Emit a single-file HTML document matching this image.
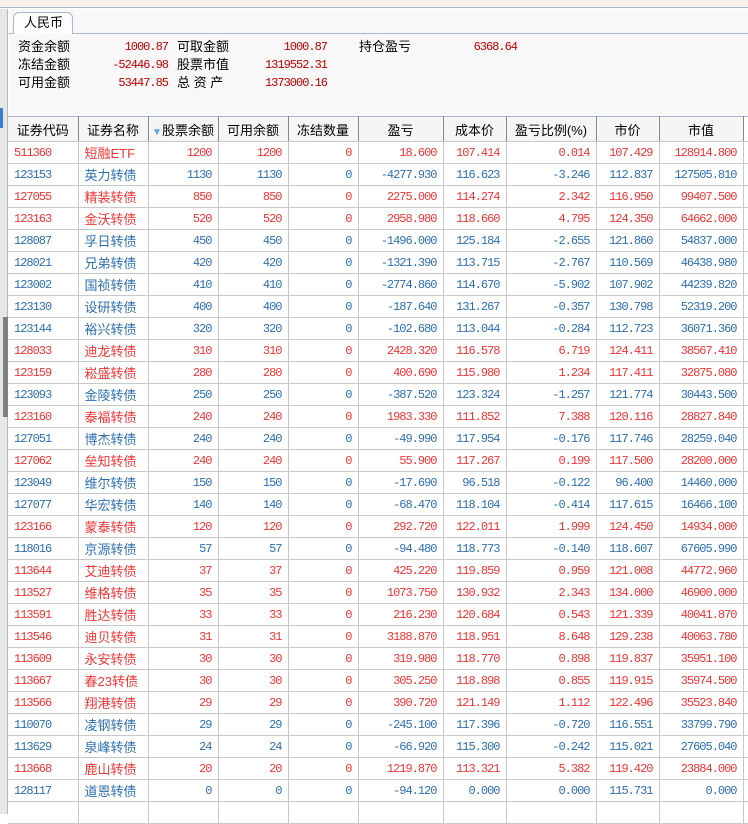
<!DOCTYPE html>
<html><head><meta charset="utf-8"><style>
*{margin:0;padding:0;box-sizing:border-box}
body{width:748px;height:814px;overflow:hidden;background:#fff;position:relative;font-family:"Liberation Sans","Noto Sans CJK SC",sans-serif}
.top{position:absolute;left:0;top:0;width:748px;height:8px;background:#f7f3ea;border-bottom:1px solid #a8b8cc}
.lstrip{position:absolute;left:0;top:9px;width:8px;height:805px;background:#e6e6e6;border-right:1px solid #b8b8b8}
.panel{position:absolute;left:9px;top:9px;width:739px;height:107px;background:#f8f8f8}
.tabline{position:absolute;left:9px;top:33px;width:739px;height:1px;background:#a8b8cc}
.tab{position:absolute;left:13px;top:12px;width:60px;height:22px;background:#fcfdff;border:1px solid #a8b8cc;border-bottom:none;border-radius:6px 6px 0 0;font-size:13px;line-height:20px;padding-left:10px;color:#000}
.info{position:absolute;font-size:13px;color:#000;line-height:18px}
.v{position:absolute;font-size:12px;color:#c00000;text-align:right;line-height:18px;font-family:"Liberation Mono",monospace;letter-spacing:-1px}
table{position:absolute;left:8px;top:116px;border-collapse:collapse;table-layout:fixed;width:740px}
th{height:25px;background:#f5f5f5;border-top:1px solid #a8b8cc;border-right:1px solid #888;border-bottom:1px solid #c8c8c8;font-weight:normal;font-size:13px;color:#000}
td{height:22px;border-right:1px solid #c8c8c8;border-bottom:1px solid #c8c8c8;font-size:12px;font-family:"Liberation Mono",monospace;letter-spacing:-1px;text-align:right;padding-right:6px;white-space:nowrap;overflow:hidden}
td.c{text-align:left;padding-left:6px}
td.n{text-align:left;padding-left:6px;font-family:"Liberation Sans","Noto Sans CJK SC",sans-serif;font-size:13px;letter-spacing:0}
tr.r td{color:#f03434}
tr.b td{color:#2e6fb0}
</style></head><body>
<div class="top"></div>
<div class="lstrip"></div>
<div style="position:absolute;left:0;top:108px;width:3px;height:20px;background:#3a7fd0"></div>
<div style="position:absolute;left:3px;top:317px;width:5px;height:100px;background:#808080"></div>
<div class="panel"></div>
<div class="tabline"></div>
<div class="tab">人民币</div>
<div class="info" style="left:18px;top:38px">资金余额</div>
<div class="info" style="left:18px;top:56px">冻结金额</div>
<div class="info" style="left:18px;top:74px">可用金额</div>
<div class="v" style="left:90px;width:78px;top:38px">1000.87</div>
<div class="v" style="left:90px;width:78px;top:56px">-52446.98</div>
<div class="v" style="left:90px;width:78px;top:74px">53447.85</div>
<div class="info" style="left:177px;top:38px">可取金额</div>
<div class="info" style="left:177px;top:56px">股票市值</div>
<div class="info" style="left:177px;top:74px">总&nbsp;资&nbsp;产</div>
<div class="v" style="left:240px;width:87px;top:38px">1000.87</div>
<div class="v" style="left:240px;width:87px;top:56px">1319552.31</div>
<div class="v" style="left:240px;width:87px;top:74px">1373000.16</div>
<div class="info" style="left:359px;top:38px">持仓盈亏</div>
<div class="v" style="left:440px;width:77px;top:38px">6368.64</div>
<table>
<colgroup><col style="width:70px"><col style="width:70px"><col style="width:70px"><col style="width:70px"><col style="width:70px"><col style="width:85px"><col style="width:63px"><col style="width:90px"><col style="width:63px"><col style="width:84px"><col style="width:5px"></colgroup>
<tr><th>证券代码</th><th>证券名称</th><th><span style="color:#5aa0e0;font-size:10px">▼</span>股票余额</th><th>可用余额</th><th>冻结数量</th><th>盈亏</th><th>成本价</th><th>盈亏比例(%)</th><th>市价</th><th>市值</th><th style="border-right:none;background:#fff"></th></tr>
<tr class="r"><td class="c">511360</td><td class="n">短融ETF</td><td>1200</td><td>1200</td><td>0</td><td>18.600</td><td>107.414</td><td>0.014</td><td>107.429</td><td>128914.800</td><td></td></tr>
<tr class="b"><td class="c">123153</td><td class="n">英力转债</td><td>1130</td><td>1130</td><td>0</td><td>-4277.930</td><td>116.623</td><td>-3.246</td><td>112.837</td><td>127505.810</td><td></td></tr>
<tr class="r"><td class="c">127055</td><td class="n">精装转债</td><td>850</td><td>850</td><td>0</td><td>2275.000</td><td>114.274</td><td>2.342</td><td>116.950</td><td>99407.500</td><td></td></tr>
<tr class="r"><td class="c">123163</td><td class="n">金沃转债</td><td>520</td><td>520</td><td>0</td><td>2958.980</td><td>118.660</td><td>4.795</td><td>124.350</td><td>64662.000</td><td></td></tr>
<tr class="b"><td class="c">128087</td><td class="n">孚日转债</td><td>450</td><td>450</td><td>0</td><td>-1496.000</td><td>125.184</td><td>-2.655</td><td>121.860</td><td>54837.000</td><td></td></tr>
<tr class="b"><td class="c">128021</td><td class="n">兄弟转债</td><td>420</td><td>420</td><td>0</td><td>-1321.390</td><td>113.715</td><td>-2.767</td><td>110.569</td><td>46438.980</td><td></td></tr>
<tr class="b"><td class="c">123002</td><td class="n">国祯转债</td><td>410</td><td>410</td><td>0</td><td>-2774.860</td><td>114.670</td><td>-5.902</td><td>107.902</td><td>44239.820</td><td></td></tr>
<tr class="b"><td class="c">123130</td><td class="n">设研转债</td><td>400</td><td>400</td><td>0</td><td>-187.640</td><td>131.267</td><td>-0.357</td><td>130.798</td><td>52319.200</td><td></td></tr>
<tr class="b"><td class="c">123144</td><td class="n">裕兴转债</td><td>320</td><td>320</td><td>0</td><td>-102.680</td><td>113.044</td><td>-0.284</td><td>112.723</td><td>36071.360</td><td></td></tr>
<tr class="r"><td class="c">128033</td><td class="n">迪龙转债</td><td>310</td><td>310</td><td>0</td><td>2428.320</td><td>116.578</td><td>6.719</td><td>124.411</td><td>38567.410</td><td></td></tr>
<tr class="r"><td class="c">123159</td><td class="n">崧盛转债</td><td>280</td><td>280</td><td>0</td><td>400.690</td><td>115.980</td><td>1.234</td><td>117.411</td><td>32875.080</td><td></td></tr>
<tr class="b"><td class="c">123093</td><td class="n">金陵转债</td><td>250</td><td>250</td><td>0</td><td>-387.520</td><td>123.324</td><td>-1.257</td><td>121.774</td><td>30443.500</td><td></td></tr>
<tr class="r"><td class="c">123160</td><td class="n">泰福转债</td><td>240</td><td>240</td><td>0</td><td>1983.330</td><td>111.852</td><td>7.388</td><td>120.116</td><td>28827.840</td><td></td></tr>
<tr class="b"><td class="c">127051</td><td class="n">博杰转债</td><td>240</td><td>240</td><td>0</td><td>-49.990</td><td>117.954</td><td>-0.176</td><td>117.746</td><td>28259.040</td><td></td></tr>
<tr class="r"><td class="c">127062</td><td class="n">垒知转债</td><td>240</td><td>240</td><td>0</td><td>55.900</td><td>117.267</td><td>0.199</td><td>117.500</td><td>28200.000</td><td></td></tr>
<tr class="b"><td class="c">123049</td><td class="n">维尔转债</td><td>150</td><td>150</td><td>0</td><td>-17.690</td><td>96.518</td><td>-0.122</td><td>96.400</td><td>14460.000</td><td></td></tr>
<tr class="b"><td class="c">127077</td><td class="n">华宏转债</td><td>140</td><td>140</td><td>0</td><td>-68.470</td><td>118.104</td><td>-0.414</td><td>117.615</td><td>16466.100</td><td></td></tr>
<tr class="r"><td class="c">123166</td><td class="n">蒙泰转债</td><td>120</td><td>120</td><td>0</td><td>292.720</td><td>122.011</td><td>1.999</td><td>124.450</td><td>14934.000</td><td></td></tr>
<tr class="b"><td class="c">118016</td><td class="n">京源转债</td><td>57</td><td>57</td><td>0</td><td>-94.480</td><td>118.773</td><td>-0.140</td><td>118.607</td><td>67605.990</td><td></td></tr>
<tr class="r"><td class="c">113644</td><td class="n">艾迪转债</td><td>37</td><td>37</td><td>0</td><td>425.220</td><td>119.859</td><td>0.959</td><td>121.008</td><td>44772.960</td><td></td></tr>
<tr class="r"><td class="c">113527</td><td class="n">维格转债</td><td>35</td><td>35</td><td>0</td><td>1073.750</td><td>130.932</td><td>2.343</td><td>134.000</td><td>46900.000</td><td></td></tr>
<tr class="r"><td class="c">113591</td><td class="n">胜达转债</td><td>33</td><td>33</td><td>0</td><td>216.230</td><td>120.684</td><td>0.543</td><td>121.339</td><td>40041.870</td><td></td></tr>
<tr class="r"><td class="c">113546</td><td class="n">迪贝转债</td><td>31</td><td>31</td><td>0</td><td>3188.870</td><td>118.951</td><td>8.648</td><td>129.238</td><td>40063.780</td><td></td></tr>
<tr class="r"><td class="c">113609</td><td class="n">永安转债</td><td>30</td><td>30</td><td>0</td><td>319.980</td><td>118.770</td><td>0.898</td><td>119.837</td><td>35951.100</td><td></td></tr>
<tr class="r"><td class="c">113667</td><td class="n">春23转债</td><td>30</td><td>30</td><td>0</td><td>305.250</td><td>118.898</td><td>0.855</td><td>119.915</td><td>35974.500</td><td></td></tr>
<tr class="r"><td class="c">113566</td><td class="n">翔港转债</td><td>29</td><td>29</td><td>0</td><td>390.720</td><td>121.149</td><td>1.112</td><td>122.496</td><td>35523.840</td><td></td></tr>
<tr class="b"><td class="c">110070</td><td class="n">凌钢转债</td><td>29</td><td>29</td><td>0</td><td>-245.100</td><td>117.396</td><td>-0.720</td><td>116.551</td><td>33799.790</td><td></td></tr>
<tr class="b"><td class="c">113629</td><td class="n">泉峰转债</td><td>24</td><td>24</td><td>0</td><td>-66.920</td><td>115.300</td><td>-0.242</td><td>115.021</td><td>27605.040</td><td></td></tr>
<tr class="r"><td class="c">113668</td><td class="n">鹿山转债</td><td>20</td><td>20</td><td>0</td><td>1219.870</td><td>113.321</td><td>5.382</td><td>119.420</td><td>23884.000</td><td></td></tr>
<tr class="b"><td class="c">128117</td><td class="n">道恩转债</td><td>0</td><td>0</td><td>0</td><td>-94.120</td><td>0.000</td><td>0.000</td><td>115.731</td><td>0.000</td><td></td></tr>
<tr class="b"><td class="c"></td><td class="n"></td><td></td><td></td><td></td><td></td><td></td><td></td><td></td><td></td><td></td></tr>
</table>
</body></html>
